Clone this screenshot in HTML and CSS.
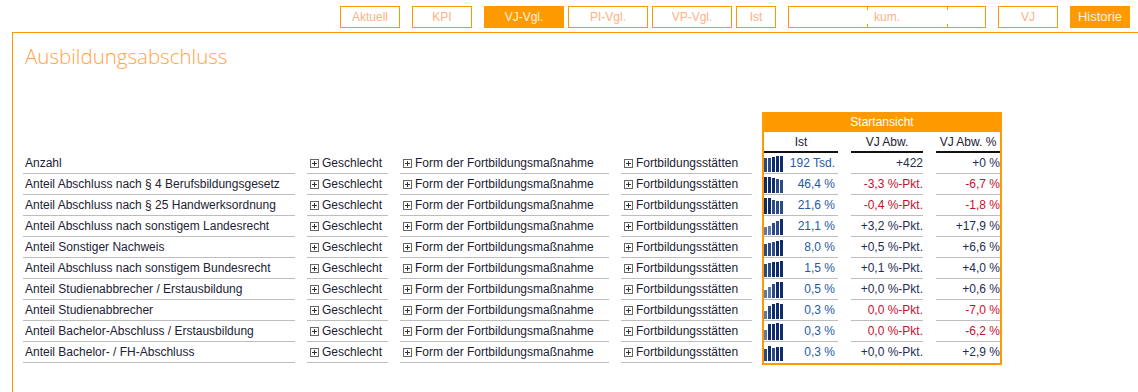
FILE: index.html
```html
<!DOCTYPE html>
<html lang="de">
<head>
  <meta charset="UTF-8">
  <meta name="viewport" content="width=device-width, initial-scale=1.0">
  <title>Ausbildungsabschluss</title>
  <link rel="stylesheet" href="styles.css">
</head>
<body>
  <nav class="tabs">
    <a class="tab w60">Aktuell</a>
    <a class="tab w60">KPI</a>
    <a class="tab w80 active">VJ-Vgl.</a>
    <a class="tab w80 tight">PI-Vgl.</a>
    <a class="tab w80 tight">VP-Vgl.</a>
    <a class="tab w40 tight">Ist</a>
    <div class="tab range">kum.</div>
    <a class="tab w60">VJ</a>
    <a class="tab w60 active big">Historie</a>
  </nav>

  <main class="panel">
    <h1>Ausbildungsabschluss</h1>
    <div class="report">
      <div class="dims" id="dims"></div>
      <div class="kpi">
        <div class="kpi-title">Startansicht</div>
        <div class="kpi-grid" id="kpi">
          <div class="kh">Ist</div>
          <div class="kh">VJ Abw.</div>
          <div class="kh">VJ Abw. %</div>
        </div>
      </div>
    </div>
  </main>

  <script>
    (function() {
      // label, Ist, VJ Abw., VJ Abw. %, red?, sparkline
      const rows = [
        ['Anzahl', '192 Tsd.', '+422', '+0 %', [0, 0], [14, 14, 15, 16, 16]],
        ['Anteil Abschluss nach § 4 Berufsbildungsgesetz', '46,4 %', '-3,3 %-Pkt.', '-6,7 %', [1, 1], [16, 16, 15, 14, 13]],
        ['Anteil Abschluss nach § 25 Handwerksordnung', '21,6 %', '-0,4 %-Pkt.', '-1,8 %', [1, 1], [16, 16, 14, 13, 13]],
        ['Anteil Abschluss nach sonstigem Landesrecht', '21,1 %', '+3,2 %-Pkt.', '+17,9 %', [0, 0], [8, 9, 12, 14, 16]],
        ['Anteil Sonstiger Nachweis', '8,0 %', '+0,5 %-Pkt.', '+6,6 %', [0, 0], [12, 13, 14, 15, 16]],
        ['Anteil Abschluss nach sonstigem Bundesrecht', '1,5 %', '+0,1 %-Pkt.', '+4,0 %', [0, 0], [13, 14, 15, 15, 16]],
        ['Anteil Studienabbrecher / Erstausbildung', '0,5 %', '+0,0 %-Pkt.', '+0,6 %', [0, 0], [8, 11, 14, 16, 16]],
        ['Anteil Studienabbrecher', '0,3 %', '0,0 %-Pkt.', '-7,0 %', [1, 1], [8, 13, 15, 16, 15]],
        ['Anteil Bachelor-Abschluss / Erstausbildung', '0,3 %', '0,0 %-Pkt.', '-6,2 %', [1, 1], [10, 16, 16, 17, 16]],
        ['Anteil Bachelor- / FH-Abschluss', '0,3 %', '+0,0 %-Pkt.', '+2,9 %', [0, 0], [12, 15, 13, 14, 14]]
      ];
      const dims = ['Geschlecht', 'Form der Fortbildungsmaßnahme', 'Fortbildungsstätten'];
      const plus = '<svg class="plus" width="9" height="9" viewBox="0 0 9 9"><rect x="0.5" y="0.5" width="8" height="8" fill="#fff" stroke="#666"/><path d="M2 4.5h5M4.5 2v5" stroke="#333"/></svg>';

      const dimsEl = document.getElementById('dims');
      const kpiEl = document.getElementById('kpi');

      rows.forEach(function(r, i) {
        const last = i === rows.length - 1 ? ' last' : '';
        let html = '<div class="cell label">' + r[0] + '</div>';
        dims.forEach(function(d) {
          html += '<div class="cell expand">' + plus + '<span>' + d + '</span></div>';
        });
        dimsEl.insertAdjacentHTML('beforeend', html);

        const max = Math.max.apply(null, r[5]);
        const bars = r[5].map(function(h) {
          const k = h / max;
          const c = k > 0.9 ? '#0f2c6c' : (k > 0.72 ? '#2b4a88' : '#5d79a8');
          return '<i style="height:' + h + 'px;background:' + c + '"></i>';
        }).join('');

        kpiEl.insertAdjacentHTML('beforeend',
          '<div class="kc ist' + last + '"><span class="spark">' + bars + '</span><span>' + r[1] + '</span></div>' +
          '<div class="kc' + last + (r[4][0] ? ' neg' : '') + '">' + r[2] + '</div>' +
          '<div class="kc' + last + (r[4][1] ? ' neg' : '') + '">' + r[3] + '</div>');
      });
    })();
  </script>
</body>
</html>
```

FILE: styles.css
```css
/* Grundlayout */
body {
  margin: 0;
  height: 392px;
  overflow: hidden;
  background: #fff;
  font-family: "Liberation Sans", Arial, sans-serif;
  font-size: 12px;
  color: #1c2233;
  display: flex;
  flex-direction: column;
}

/* Reiter oben */
.tabs {
  display: flex;
  justify-content: flex-end;
  padding: 6px 8px 0 0;
  height: 22px;
}
.tab {
  box-sizing: border-box;
  height: 22px;
  margin-left: 12px;
  border: 1px solid #ff9900;
  color: #ffb084;
  font-size: 12px;
  line-height: 20px;
  text-align: center;
  text-decoration: none;
}
.tab.tight { margin-left: 4px; }
.w40 { width: 40px; }
.w60 { width: 60px; }
.w80 { width: 80px; }
.tab.active {
  background: #ff9900;
  color: #fff3e6;
}
.tab.big { font-size: 13px; }
.range {
  position: relative;
  width: 198px;
}
.range::before,
.range::after {
  content: "";
  position: absolute;
  top: 0;
  bottom: 0;
  width: 1px;
  background: linear-gradient(#ff9900 0 3px, transparent 3px calc(100% - 3px), #ff9900 calc(100% - 3px));
}
.range::before { left: 78px; }
.range::after { left: 158px; }

/* Inhaltsbereich */
.panel {
  flex: 1;
  margin: 4px 0 0 12px;
  border-top: 1px solid #ff9900;
  border-left: 1px solid #ff9900;
}
h1 {
  margin: 0;
  padding: 10px 0 0 12px;
  font-family: "Open Sans", "Liberation Sans", sans-serif;
  font-weight: 300;
  font-size: 20.5px;
  line-height: 26px;
  color: #ffa347;
}
.report {
  display: flex;
  margin: 43px 0 0 10px;
}

/* linke Tabelle */
.dims {
  display: grid;
  grid-template-columns: 272px 81px 209px 131px;
  column-gap: 12px;
  grid-auto-rows: 21px;
  padding-top: 41px;
  margin-right: 10px;
}
.cell {
  box-sizing: border-box;
  border-bottom: 1px solid #bdbdbd;
  line-height: 21px;
  white-space: nowrap;
}
.label { padding-left: 2px; }
.expand {
  display: flex;
  align-items: center;
  gap: 3px;
  padding-left: 3px;
}
.plus { flex: none; }

/* Kennzahlen-Box */
.kpi {
  width: 240px;
  box-sizing: border-box;
  border: 2px solid #ff9900;
  border-top: 0;
  align-self: flex-start;
}
.kpi-title {
  margin: 0 -2px;
  height: 20px;
  background: #ff9900;
  color: #fff;
  font-size: 12px;
  line-height: 20px;
  text-align: center;
}
.kpi-grid {
  display: grid;
  grid-template-columns: 74px 72px 64px;
  column-gap: 13px;
  grid-auto-rows: 21px;
}
.kh {
  box-sizing: border-box;
  border-bottom: 2px solid #111;
  line-height: 20px;
  text-align: center;
}
.kc {
  box-sizing: border-box;
  border-bottom: 1px solid #bdbdbd;
  line-height: 21px;
  text-align: right;
  color: #1f2d55;
  white-space: nowrap;
}
.kc.last { border-bottom: 0; }
.kc.neg { color: #c8102e; }
.ist {
  display: flex;
  justify-content: space-between;
  padding-right: 3px;
  color: #1f5aa6;
}
.spark {
  display: flex;
  align-items: flex-end;
  gap: 1px;
  height: 19px;
}
.spark i {
  display: block;
  width: 3px;
}
```
